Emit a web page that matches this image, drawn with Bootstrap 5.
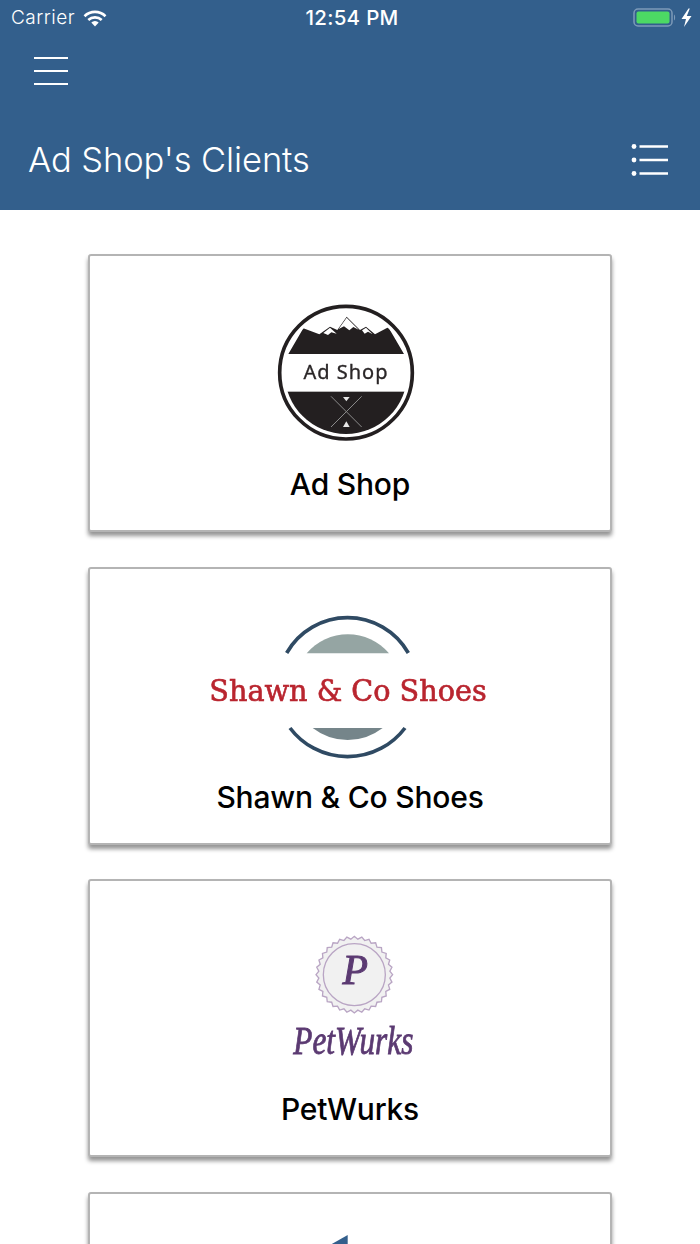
<!DOCTYPE html>
<html lang="en">
<head>
    <meta charset="UTF-8">
    <meta name="viewport" content="width=device-width, initial-scale=1.0">
    <title>Ad Shop's Clients</title>
    <link href="https://cdn.jsdelivr.net/npm/bootstrap@5.3.0/dist/css/bootstrap.min.css" rel="stylesheet">
    <style>
        html, body {
            height: 1244px;
            overflow: hidden;
        }
        body {
            background-color: #ffffff;
            font-family: Inter, "Liberation Sans", sans-serif;
        }
        .app-top {
            background-color: #335f8c;
            color: #ffffff;
            height: 210px;
        }
        .status-row {
            height: 36px;
            padding: 0 7px 0 11px;
            font-size: 19px;
            font-weight: 300;
            letter-spacing: .5px;
        }
        .status-side {
            width: 200px;
        }
        .status-time {
            font-weight: 500;
            font-size: 20.5px;
            letter-spacing: .3px;
        }
        .menu-row {
            padding: 20px 0 0 33px;
            height: 102px;
        }
        .title-row {
            padding: 0 31px 0 28px;
        }
        .title-text {
            font-size: 34.5px;
            font-weight: 300;
            line-height: 44px;
            margin: 0;
            letter-spacing: -0.1px;
        }
        .client-list {
            padding: 44px 88px 0;
            gap: 34.67px;
        }
        .client-card {
            height: 278px;
            flex: none;
            border: 2px solid #b4b4b4;
            border-radius: 3px;
            box-shadow: 0 4px 4px rgba(0, 0, 0, .42);
            padding-top: 43px;
        }
        .client-logo {
            display: block;
            width: 320px;
            height: 170px;
            overflow: visible;
            filter: blur(.35px);
        }
        .client-name {
            font-size: 30px;
            font-weight: 500;
            line-height: 30px;
            color: #000000;
            margin: 0;
            letter-spacing: -0.2px;
        }
        .logo-serif {
            font-family: "DejaVu Serif", serif;
        }
        .logo-script {
            font-family: "Liberation Serif", serif;
            font-style: italic;
        }
    </style>
</head>
<body>
    <div class="app-top">
        <!-- Status bar -->
        <div class="status-row d-flex align-items-center justify-content-between">
            <div class="status-side d-flex align-items-center gap-2">
                <span>Carrier</span>
                <svg width="24" height="17" viewBox="0 0 24 17">
                    <path d="M1.5 6.2a15 15 0 0 1 21 0" fill="none" stroke="#fff" stroke-width="2.6"/>
                    <path d="M5.3 10a9.8 9.8 0 0 1 13.4 0" fill="none" stroke="#fff" stroke-width="2.6"/>
                    <path d="M12 16.5l-3.7-3.9a5.2 5.2 0 0 1 7.4 0z" fill="#fff"/>
                </svg>
            </div>
            <span class="status-time">12:54 PM</span>
            <div class="status-side d-flex align-items-center justify-content-end">
                <svg width="60" height="20" viewBox="0 0 60 20">
                    <rect x="1" y="1" width="38" height="17" rx="4" fill="none" stroke="#7d9ab8" stroke-width="1.5"/>
                    <rect x="3.5" y="3.5" width="33" height="12" rx="2" fill="#4cd964"/>
                    <path d="M41 6.5c1.5.5 1.5 5.500 0 6z" fill="#7d9ab8"/>
                    <path d="M55.500 .5l-7 10.500h4.500l-2 8 7.500-11h-4.700l3-7.500z" fill="#fff"/>
                </svg>
            </div>
        </div>
        <!-- Menu button -->
        <div class="menu-row">
            <svg class="d-block" width="36" height="30" viewBox="0 0 36 30">
                <path d="M1 2h34M1 15h34M1 28h34" stroke="#fff" stroke-width="2" fill="none"/>
            </svg>
        </div>
        <!-- Title -->
        <div class="title-row d-flex align-items-center justify-content-between">
            <h1 class="title-text">Ad Shop's Clients</h1>
            <svg width="38" height="36" viewBox="0 0 38 36">
                <circle cx="3" cy="4.500" r="2.400" fill="#fff"/>
                <circle cx="3" cy="18" r="2.400" fill="#fff"/>
                <circle cx="3" cy="31.500" r="2.400" fill="#fff"/>
                <path d="M8.500 4.500h28.500M8.500 18h28.500M8.500 31.500h28.500" stroke="#fff" stroke-width="2.400" fill="none"/>
            </svg>
        </div>
    </div>

    <div class="client-list d-flex flex-column">
        <div class="card client-card align-items-center">
            <svg class="client-logo" viewBox="-210 12 960 510">
                <defs>
                    <clipPath id="adshop-disc"><circle cx="258" cy="233" r="184"/></clipPath>
                </defs>
                <circle cx="258" cy="233" r="199" fill="#fff" stroke="#231f20" stroke-width="11"/>
                <g clip-path="url(#adshop-disc)">
                    <path d="M60 177L85 177L130 100L178 118L210 95L232 105L260 65L300 105L318 95L345 118L385 97L432 177z" fill="#231f20"/>
                    <path d="M236 102L260 68L296 104L280 96L268 106L252 94z M190 114L210 98L230 116L214 112L204 120z M306 106L318 98L338 118L324 110L314 116z" fill="#fff"/>
                    <rect x="60" y="290" width="400" height="140" fill="#231f20"/>
                </g>
                <text x="258" y="251" text-anchor="middle" font-family="'Noto Sans', sans-serif" font-size="60" letter-spacing="3" fill="#2a2627" stroke="#2a2627" stroke-width="1">Ad Shop</text>
                <path d="M213 304L305 396M305 304L213 396" stroke="#8b8b8b" stroke-width="3"/>
                <path d="M249 306h20l-10 13z" fill="#e8e8e8"/>
                <path d="M249 396h20l-10-17z" fill="#e8e8e8"/>
            </svg>
            <p class="client-name">Ad Shop</p>
        </div>

        <div class="card client-card align-items-center">
            <svg class="client-logo" viewBox="0 21 960 510">
                <path d="M290 144A210 210 0 0 1 655 144" fill="none" stroke="#2f4a63" stroke-width="11"/>
                <path d="M350 145A162 162 0 0 1 597 145z" fill="#95a5a3"/>
                <text class="logo-serif" x="58" y="289" textLength="832" lengthAdjust="spacingAndGlyphs" font-size="92" fill="#b9252f" stroke="#b9252f" stroke-width="2">Shawn &amp; Co Shoes</text>
                <path d="M300 369A216 216 0 0 0 645 369" fill="none" stroke="#2f4a63" stroke-width="11"/>
                <path d="M368 369A171 171 0 0 0 578 369z" fill="#75858a"/>
            </svg>
            <p class="client-name">Shawn &amp; Co Shoes</p>
        </div>

        <div class="card client-card align-items-center">
            <svg class="client-logo" viewBox="-240 0 960 510">
                <polygon id="petwurks-seal" fill="#f1f1f1" stroke="#b9a5c4" stroke-width="4"/>
                <circle cx="253" cy="152" r="93" fill="#f1f1f1" stroke="#b9a5c4" stroke-width="4"/>
                <text class="logo-script" x="256" y="180" text-anchor="middle" font-size="125" fill="#5b3a72" stroke="#5b3a72" stroke-width="3">P</text>
                <text class="logo-script" x="70" y="390" textLength="360" lengthAdjust="spacingAndGlyphs" font-size="118" fill="#5b3a72" stroke="#5b3a72" stroke-width="2.500">PetWurks</text>
            </svg>
            <p class="client-name">PetWurks</p>
        </div>

        <div class="card client-card align-items-center">
            <svg class="client-logo" viewBox="190 1237 320 170">
                <polygon points="347.700,1235 347.700,1300 300,1262" fill="#335f8c"/>
            </svg>
        </div>
    </div>

    <script>
        // scalloped edge of the PetWurks seal
        const seal = document.getElementById('petwurks-seal');
        const points = [];
        for (let i = 0; i < 64; i++) {
            const angle = i / 64 * Math.PI * 2;
            const radius = i % 2 ? 107 : 115;
            points.push((253 + radius * Math.cos(angle)).toFixed(1) + ',' + (152 + radius * Math.sin(angle)).toFixed(1));
        }
        seal.setAttribute('points', points.join(' '));
    </script>
    <script src="https://cdn.jsdelivr.net/npm/bootstrap@5.3.0/dist/js/bootstrap.bundle.min.js"></script>
</body>
</html>
